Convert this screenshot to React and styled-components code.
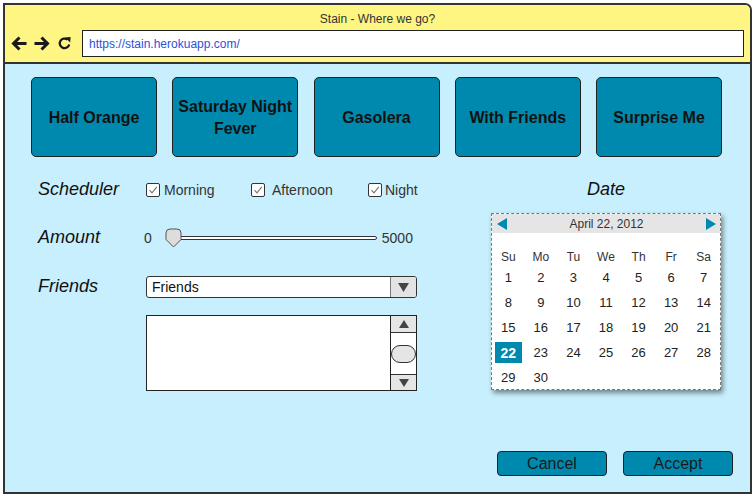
import React from "react";
import styled, { createGlobalStyle } from "styled-components";

const Global = createGlobalStyle`
  html, body { margin: 0; padding: 0; background: #fff; }
  body { font-family: "Liberation Sans", Arial, sans-serif; }
  * { box-sizing: border-box; }
`;

const Frame = styled.div`
  margin: 3px 0 0 3px;
  width: 749px;
  height: 491px;
  border: 2px solid #333;
  border-radius: 0 7px 0 0;
  overflow: hidden;
  display: flex;
  flex-direction: column;
  background: #c8effd;
`;

const Header = styled.header`
  background: #fff583;
  border-bottom: 2px solid #333;
  height: 59px;
  display: flex;
  flex-direction: column;
`;

const Title = styled.div`
  padding-top: 7px;
  height: 20px;
  line-height: 14px;
  font-size: 12px;
  color: #333;
  text-align: center;
`;

const AddressRow = styled.div`
  display: flex;
  align-items: center;
  margin-top: 5px;
  padding: 0 6px 0 6px;
`;

const NavIcons = styled.div`
  display: flex;
  align-items: center;
  gap: 7px;
  width: 71px;
`;

const UrlBox = styled.div`
  flex: 1;
  height: 27px;
  border: 1.5px solid #222;
  background: #fff;
  display: flex;
  align-items: center;
  padding-left: 6px;
  font-size: 12px;
  color: #2f4fd8;
`;

const Body = styled.main`
  flex: 1;
  display: flex;
  flex-direction: column;
  padding: 13px 0 16px 26px;
`;

const ButtonRow = styled.div`
  display: flex;
  gap: 15.25px;
`;

const BigButton = styled.button`
  width: 126px;
  height: 80px;
  border: 1px solid #222;
  border-radius: 5px;
  background: #0089ae;
  color: #111;
  font-family: "Liberation Sans", Arial, sans-serif;
  font-weight: bold;
  font-size: 16px;
  line-height: 22px;
  padding: 2px 4px 0;
  text-align: center;
`;

const Main = styled.div`
  display: flex;
  margin-top: 23px;
  padding-left: 7px;
`;

const Form = styled.div`
  width: 379px;
  display: flex;
  flex-direction: column;
`;

const Row = styled.div`
  display: grid;
  grid-template-columns: 108px 1fr;
  align-items: center;
  height: ${(p) => p.$h}px;
  margin-top: ${(p) => p.$mt || 0}px;
`;

const Label = styled.div`
  font-style: italic;
  font-size: 18px;
  color: #111;
  line-height: 20px;
  margin-top: ${(p) => p.$shift || 0}px;
`;

const CheckGroup = styled.div`
  display: flex;
  align-items: center;
`;

const CheckItem = styled.label`
  display: flex;
  align-items: center;
  gap: ${(p) => p.$gap}px;
  width: ${(p) => (p.$w ? p.$w + "px" : "auto")};
  font-size: 14px;
  color: #333;
`;

const Box = styled.span`
  width: 14px;
  height: 14px;
  border: 1px solid #333;
  border-radius: 2px;
  background: #fff;
  display: flex;
  align-items: center;
  justify-content: center;
`;

const SliderRow = styled.div`
  display: flex;
  align-items: center;
  font-size: 14px;
  color: #333;
  margin-left: -2px;
`;

const Track = styled.div`
  position: relative;
  width: 212px;
  height: 20px;
  margin-left: 13px;
  display: flex;
  align-items: center;
`;

const TrackLine = styled.div`
  margin-left: 4px;
  flex: 1;
  height: 4px;
  border: 1px solid #333;
  border-radius: 2px;
  background: #fff;
`;

const Thumb = styled.svg`
  position: absolute;
  left: 0;
  top: 0;
`;

const MaxValue = styled.span`
  margin-left: 5px;
`;

const Select = styled.div`
  height: 22px;
  border: 1px solid #333;
  border-radius: 3px;
  background: #fff;
  display: flex;
  align-items: stretch;
  overflow: hidden;
  font-size: 14px;
  color: #111;
`;

const SelectText = styled.div`
  flex: 1;
  display: flex;
  align-items: center;
  padding-left: 5px;
`;

const SelectArrow = styled.div`
  width: 26px;
  background: #e3e3e3;
  border-left: 1px solid #777;
  display: flex;
  align-items: center;
  justify-content: center;
`;

const ListBox = styled.div`
  margin: 17px 0 0 108px;
  height: 76px;
  border: 1px solid #222;
  background: #fff;
  display: flex;
`;

const ListArea = styled.div`
  flex: 1;
`;

const ScrollBar = styled.div`
  width: 26px;
  border-left: 1px solid #222;
  display: flex;
  flex-direction: column;
`;

const ScrollBtn = styled.div`
  height: ${(p) => p.$h}px;
  background: #e5e5e5;
  border-top: ${(p) => (p.$bottom ? "1px solid #333" : "none")};
  border-bottom: ${(p) => (p.$bottom ? "none" : "1px solid #333")};
  display: flex;
  align-items: center;
  justify-content: center;
`;

const ScrollTrack = styled.div`
  flex: 1;
  display: flex;
  align-items: center;
`;

const ScrollThumb = styled.div`
  width: 100%;
  height: 18px;
  border: 1px solid #333;
  border-radius: 9px;
  background: #e5e5e5;
`;

const DateCol = styled.div`
  margin-left: 74px;
  width: 230px;
  display: flex;
  flex-direction: column;
`;

const DateLabel = styled(Label)`
  text-align: center;
  margin-top: -1px;
`;

const Calendar = styled.div`
  margin-top: 14px;
  width: 230px;
  height: 177px;
  border: 1px dashed #777;
  background: #fff;
  box-shadow: 2px 3px 5px rgba(0, 0, 0, 0.45);
`;

const CalHeader = styled.div`
  height: 19px;
  background: #e5e5e5;
  display: flex;
  align-items: center;
  justify-content: space-between;
  padding: 0 4px 0 5px;
  font-size: 12px;
  color: #333;
`;

const DayGrid = styled.div`
  padding-top: 15px;
  display: grid;
  grid-template-columns: repeat(7, 1fr);
  grid-template-rows: 17px repeat(5, 25px);
`;

const DayName = styled.div`
  font-size: 12px;
  color: #333;
  display: flex;
  align-items: center;
  justify-content: center;
`;

const Day = styled.div`
  display: flex;
  align-items: center;
  justify-content: center;
  font-size: 13px;
  color: #222;
`;

const Selected = styled.span`
  width: 27px;
  height: 21px;
  background: #0089ae;
  color: #fff;
  font-weight: bold;
  display: flex;
  align-items: center;
  justify-content: center;
  font-size: 14px;
`;

const Footer = styled.div`
  margin-top: auto;
  display: flex;
  justify-content: flex-end;
  gap: 16px;
  padding-right: 17px;
`;

const SmallButton = styled.button`
  width: 110px;
  height: 25px;
  border: 1px solid #222;
  border-radius: 4px;
  background: #0089ae;
  color: #1a1a1a;
  font-family: "Liberation Sans", Arial, sans-serif;
  font-size: 16px;
  padding: 0;
`;

const Check = () => (
  <svg width="10" height="10" viewBox="0 0 10 10">
    <path d="M1.5 5.2 L4 7.8 L8.8 1.8" fill="none" stroke="#777" strokeWidth="1.1" />
  </svg>
);

const Tri = ({ dir, color = "#444", w = 10, h = 8 }) => {
  const pts = {
    up: `0,${h} ${w / 2},0 ${w},${h}`,
    down: `0,0 ${w},0 ${w / 2},${h}`,
    left: `${w},0 0,${h / 2} ${w},${h}`,
    right: `0,0 ${w},${h / 2} 0,${h}`,
  }[dir];
  return (
    <svg width={w} height={h} viewBox={`0 0 ${w} ${h}`}>
      <polygon points={pts} fill={color} />
    </svg>
  );
};

const BackIcon = ({ flip }) => (
  <svg width="16" height="15" viewBox="0 0 16 15" style={flip ? { transform: "scaleX(-1)" } : undefined}>
    <path d="M15.5 7.5H2.5 M8.5 1.5L2.5 7.5l6 6" fill="none" stroke="#1a1a1a" strokeWidth="3" strokeLinejoin="miter" />
  </svg>
);

const ReloadIcon = () => (
  <svg width="15" height="15" viewBox="0 0 15 15">
    <path d="M12.2 8.4a4.8 4.8 0 1 1-1.7-4.8" fill="none" stroke="#1a1a1a" strokeWidth="2.3" />
    <polygon points="8,1.4 13.6,1 13.2,6.6" fill="#1a1a1a" />
  </svg>
);

const destinations = ["Half Orange", "Saturday Night Fever", "Gasolera", "With Friends", "Surprise Me"];
const dayNames = ["Su", "Mo", "Tu", "We", "Th", "Fr", "Sa"];
const days = Array.from({ length: 30 }, (_, i) => i + 1);

export default function App() {
  return (
    <>
      <Global />
      <Frame>
        <Header>
          <Title>Stain - Where we go?</Title>
          <AddressRow>
            <NavIcons>
              <BackIcon />
              <BackIcon flip />
              <ReloadIcon />
            </NavIcons>
            <UrlBox>https://stain.herokuapp.com/</UrlBox>
          </AddressRow>
        </Header>
        <Body>
          <ButtonRow>
            {destinations.map((d) => (
              <BigButton key={d}>{d}</BigButton>
            ))}
          </ButtonRow>
          <Main>
            <Form>
              <Row $h={20}>
                <Label $shift={-2}>Scheduler</Label>
                <CheckGroup>
                  <CheckItem $w={105} $gap={4}>
                    <Box><Check /></Box>Morning
                  </CheckItem>
                  <CheckItem $w={117} $gap={7}>
                    <Box><Check /></Box>Afternoon
                  </CheckItem>
                  <CheckItem $gap={3}>
                    <Box><Check /></Box>Night
                  </CheckItem>
                </CheckGroup>
              </Row>
              <Row $h={20} $mt={28}>
                <Label $shift={-2}>Amount</Label>
                <SliderRow>
                  <span>0</span>
                  <Track>
                    <TrackLine />
                    <Thumb width="17" height="20" viewBox="0 0 17 20">
                      <path d="M1 5 Q1 1 5 1 H12 Q16 1 16 5 V11.5 L8.5 19 L1 11.5 Z" fill="#ddd" stroke="#555" strokeWidth="1" />
                    </Thumb>
                  </Track>
                  <MaxValue>5000</MaxValue>
                </SliderRow>
              </Row>
              <Row $h={22} $mt={28}>
                <Label $shift={-3}>Friends</Label>
                <Select>
                  <SelectText>Friends</SelectText>
                  <SelectArrow>
                    <Tri dir="down" w={11} h={9} />
                  </SelectArrow>
                </Select>
              </Row>
              <ListBox>
                <ListArea />
                <ScrollBar>
                  <ScrollBtn $h={17}>
                    <Tri dir="up" w={10} h={8} />
                  </ScrollBtn>
                  <ScrollTrack>
                    <ScrollThumb />
                  </ScrollTrack>
                  <ScrollBtn $h={16} $bottom>
                    <Tri dir="down" w={10} h={8} />
                  </ScrollBtn>
                </ScrollBar>
              </ListBox>
            </Form>
            <DateCol>
              <DateLabel>Date</DateLabel>
              <Calendar>
                <CalHeader>
                  <Tri dir="left" color="#0089ae" w={10} h={12} />
                  <span>April 22, 2012</span>
                  <Tri dir="right" color="#0089ae" w={10} h={12} />
                </CalHeader>
                <DayGrid>
                  {dayNames.map((n) => (
                    <DayName key={n}>{n}</DayName>
                  ))}
                  {days.map((d) => (
                    <Day key={d}>{d === 22 ? <Selected>22</Selected> : d}</Day>
                  ))}
                </DayGrid>
              </Calendar>
            </DateCol>
          </Main>
          <Footer>
            <SmallButton>Cancel</SmallButton>
            <SmallButton>Accept</SmallButton>
          </Footer>
        </Body>
      </Frame>
    </>
  );
}
